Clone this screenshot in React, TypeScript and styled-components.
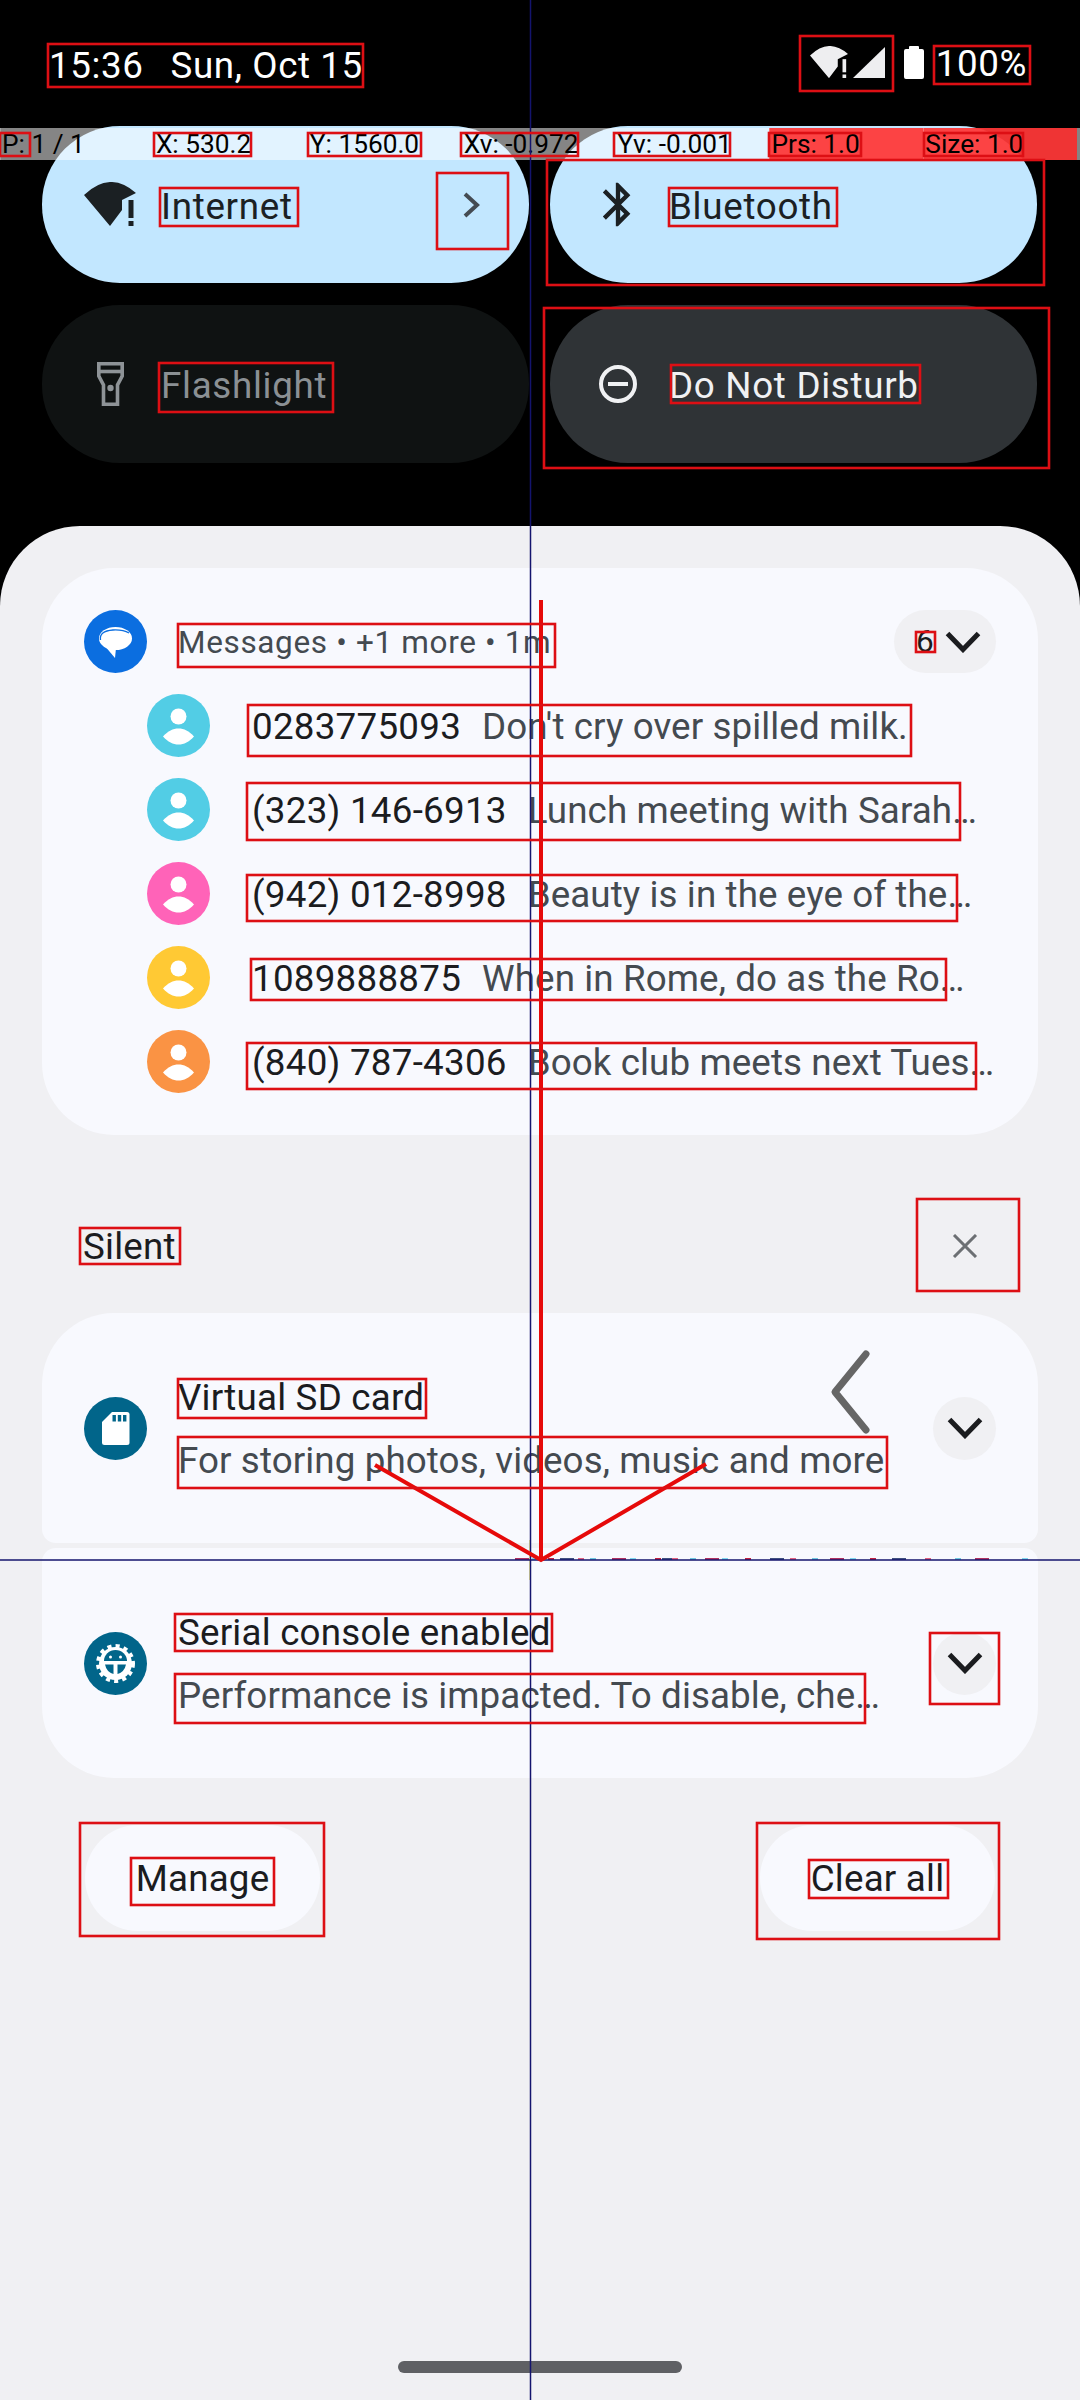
import React from "react";
import styled, { createGlobalStyle } from "styled-components";

const Global = createGlobalStyle`
  html, body { margin: 0; padding: 0; background: #000; }
  * { box-sizing: border-box; }
`;

const Page = styled.div`
  position: relative;
  width: 1080px;
  height: 2400px;
  overflow: hidden;
  display: flex;
  flex-direction: column;
  background: #000;
  font-family: Roboto, "Noto Sans", sans-serif;
  font-size: 36.75px;
`;

const StatusBar = styled.header`
  height: 126px;
  padding: 4px 53px 0 49px;
  display: flex;
  align-items: center;
  justify-content: space-between;
  color: #fff;
  letter-spacing: 0.6px;
`;
const Clock = styled.div`
  display: flex;
  gap: 27px;
`;
const StatusIcons = styled.div`
  display: flex;
  align-items: center;
  margin-top: -6px;
`;
const Percent = styled.span`
  margin-left: 12px;
  padding-top: 3px;
`;

const TileGrid = styled.section`
  display: grid;
  grid-template-columns: 487px 487px;
  grid-template-rows: 157px 158px;
  gap: 22px 21px;
  padding: 0 43px 0 42px;
`;
const Tile = styled.div<{ $bg: string; $fg: string }>`
  display: flex;
  align-items: center;
  gap: 25px;
  padding: 0 49px 0 42px;
  border-radius: 78px;
  background: ${(p) => p.$bg};
  color: ${(p) => p.$fg};
`;
const IconSlot = styled.span`
  width: 52px;
  height: 52px;
  display: flex;
  align-items: center;
  justify-content: center;
  flex: none;
`;
const TileLabel = styled.span`
  flex: 1;
  padding-top: 3px;
  letter-spacing: 0.7px;
`;

const Panel = styled.main`
  flex: 1;
  margin-top: 63px;
  padding: 42px 42px 27px;
  display: flex;
  flex-direction: column;
  background: #f0f0f3;
  border-radius: 80px 80px 0 0;
`;

const GroupCard = styled.article`
  height: 567px;
  padding: 42px 42px 0 42px;
  background: #f8f9fe;
  border-radius: 72px;
  display: flex;
  flex-direction: column;
  gap: 21px;
`;
const GroupHeader = styled.div`
  height: 63px;
  display: flex;
  align-items: center;
  gap: 31px;
`;
const HeaderText = styled.span`
  flex: 1;
  padding-top: 2px;
  font-size: 31.5px;
  letter-spacing: 0.65px;
  color: #444a50;
`;
const CountPill = styled.span`
  width: 102px;
  height: 63px;
  padding-left: 22px;
  display: flex;
  align-items: center;
  gap: 11px;
  border-radius: 32px;
  background: #f0f0f3;
  color: #1b1c1f;
  font-size: 31.5px;
`;
const MessageList = styled.ul`
  list-style: none;
  margin: 0;
  padding: 0 0 0 63px;
  display: flex;
  flex-direction: column;
  gap: 21px;
`;
const MessageRow = styled.li`
  height: 63px;
  display: flex;
  align-items: center;
  gap: 42px;
  white-space: nowrap;
`;
const MessageLine = styled.span`
  padding-top: 2px;
`;
const Sender = styled.span`
  color: #1b1c1f;
  letter-spacing: 0.25px;
`;
const Body = styled.span`
  margin-left: 21px;
  letter-spacing: 0.1px;
  color: #444a50;
`;

const SectionHeader = styled.div`
  height: 178px;
  padding: 44px 60px 0 41px;
  display: flex;
  align-items: center;
  justify-content: space-between;
  color: #1b1c1f;
  letter-spacing: 0.2px;
`;

const NotificationCard = styled.article<{ $position: "top" | "bottom" }>`
  height: 230px;
  padding: 0 42px 0 42px;
  display: flex;
  align-items: center;
  gap: 31px;
  background: #f8f9fe;
  border-radius: ${(p) => (p.$position === "top" ? "72px 72px 14px 14px" : "14px 14px 72px 72px")};
  margin-bottom: ${(p) => (p.$position === "top" ? "5px" : "0")};
`;
const NotificationText = styled.div`
  flex: 1;
  padding-top: 2px;
  line-height: 63px;
  white-space: nowrap;
`;
const Title = styled.div`
  color: #1b1c1f;
  letter-spacing: 0.2px;
`;
const Sub = styled.div`
  color: #444a50;
  letter-spacing: 0.1px;
`;
const ExpandButton = styled.span`
  width: 63px;
  height: 63px;
  flex: none;
  display: flex;
  align-items: center;
  justify-content: center;
  border-radius: 50%;
  background: #f0f0f3;
`;

const Footer = styled.div`
  margin-top: 47px;
  padding: 0 43px;
  display: flex;
  justify-content: space-between;
`;
const PillButton = styled.button`
  width: 235px;
  height: 106px;
  border: 0;
  padding: 0;
  border-radius: 53px;
  background: #f8f9fe;
  color: #1b1c1f;
  font: inherit;
  letter-spacing: 0.2px;
`;
const HomeBar = styled.div`
  margin-top: auto;
  align-self: center;
  width: 284px;
  height: 12px;
  border-radius: 6px;
  background: #5f6064;
`;

const PointerBar = styled.div`
  position: absolute;
  top: 128px;
  left: 0;
  width: 100%;
  height: 32px;
  display: grid;
  grid-template-columns: repeat(7, 153.9px);
  background: rgba(255, 255, 255, 0.52);
  font-size: 26.25px;
  line-height: 32px;
  color: #000;
`;
const PointerCell = styled.span<{ $alert?: boolean }>`
  padding-left: 1px;
  white-space: nowrap;
  border-left: 1px solid rgba(255, 255, 255, 0.25);
  background: ${(p) => (p.$alert ? "rgba(255, 40, 40, 0.87)" : "transparent")};
`;

const Overlay = styled.svg`
  position: absolute;
  inset: 0;
  pointer-events: none;
`;

const Chevron = () => (
  <svg width="36" height="22" viewBox="0 0 36 22">
    <path d="M2.5 2.5 L18 18.5 L33.5 2.5" fill="none" stroke="#1b1c1f" strokeWidth="5" />
  </svg>
);

const WifiAlert = ({ w, color }: { w: number; color: string }) => (
  <svg width={w} height={(w * 45) / 52} viewBox="0 0 52 45" style={{ flex: "none" }}>
    <path d="M0 13 Q26 -12 52 11 L38 18 V28 L26 44 Z" fill={color} />
    <rect x="44.5" y="18" width="5" height="18" fill={color} />
    <rect x="44.5" y="39" width="5" height="5" fill={color} />
  </svg>
);

const Bluetooth = () => (
  <svg width="53" height="53" viewBox="0 0 24 24" fill="#1b2023">
    <path d="M17.71 7.71L12 2h-1v7.59L6.41 5 5 6.41 10.59 12 5 17.59 6.41 19 11 14.41V22h1l5.71-5.71-4.3-4.29 4.3-4.29zM13 5.83l1.88 1.88L13 9.59V5.83zm1.88 10.46L13 18.17v-3.76l1.88 1.88z" />
  </svg>
);

const Flashlight = () => (
  <svg width="27" height="44" viewBox="0 0 27 44" fill="none" stroke="#8e9397" strokeWidth="3.6">
    <path d="M1.8 1.8 H25.2 V14 L20.5 23 V42.2 H6.5 V23 L1.8 14 Z" />
    <path d="M1.8 9.5 H25.2" />
    <circle cx="13.5" cy="26" r="3.2" fill="#8e9397" stroke="none" />
  </svg>
);

const MinusCircle = () => (
  <svg width="40" height="40" viewBox="0 0 40 40">
    <circle cx="20" cy="20" r="17" fill="none" stroke="#f0f1f3" strokeWidth="4" />
    <rect x="10" y="18" width="20" height="4" fill="#f0f1f3" />
  </svg>
);

const MessagesIcon = () => (
  <svg width="63" height="63" viewBox="0 0 63 63" style={{ flex: "none" }}>
    <circle cx="31.5" cy="31.5" r="31.5" fill="#0b6ee0" />
    <ellipse cx="31.5" cy="28.5" rx="16.5" ry="11.5" fill="#fff" />
    <path d="M20 35 L31 48 L32 38 Z" fill="#fff" />
    <path d="M16.5 30 Q15 21 29 20 Q39 19.5 45 23" fill="none" stroke="#0b6ee0" strokeWidth="1.3" />
  </svg>
);

const Avatar = ({ color }: { color: string }) => (
  <svg width="63" height="63" viewBox="0 0 63 63" style={{ flex: "none" }}>
    <circle cx="31.5" cy="31.5" r="31.5" fill={color} />
    <circle cx="31.5" cy="22.5" r="8" fill="#fff" />
    <path d="M16 42.5 C21 37 26 34.5 31.5 34.5 C37 34.5 42 37 47 42.5 C42 48 37 50.5 31.5 50.5 C26 50.5 21 48 16 42.5 Z" fill="#fff" />
  </svg>
);

const SdCardIcon = () => (
  <svg width="63" height="63" viewBox="0 0 63 63" style={{ flex: "none" }}>
    <circle cx="31.5" cy="31.5" r="31.5" fill="#01658a" />
    <path d="M28 15 H43 Q45.5 15 45.5 17.5 V45.5 Q45.5 48 43 48 H20.5 Q18 48 18 45.5 V25 Z" fill="#fff" />
    <rect x="28.5" y="18" width="3.4" height="6.5" fill="#01658a" />
    <rect x="33.8" y="18" width="3.4" height="6.5" fill="#01658a" />
    <rect x="39" y="18" width="3.4" height="6.5" fill="#01658a" />
  </svg>
);

const GearIcon = () => (
  <svg width="63" height="63" viewBox="0 0 63 63" style={{ flex: "none" }}>
    <circle cx="31.5" cy="31.5" r="31.5" fill="#01658a" />
    <circle cx="31.5" cy="31.5" r="16.5" fill="#fff" />
    <circle cx="31.5" cy="31.5" r="17.5" fill="none" stroke="#fff" strokeWidth="4" strokeDasharray="4.1 4.1" />
    <path d="M20 29 A11.5 11 0 0 1 43 29 Z" fill="#01658a" />
    <circle cx="26.5" cy="25" r="1.5" fill="#fff" />
    <circle cx="36.5" cy="25" r="1.5" fill="#fff" />
    <path d="M21 32.5 H29.5 V42 Q22.5 40 21 32.5 Z" fill="#01658a" />
    <path d="M42 32.5 H33.5 V42 Q40.5 40 42 32.5 Z" fill="#01658a" />
  </svg>
);

type Box = [number, number, number, number];
const boxes: Box[] = [
  [48, 44, 363, 87], [800, 36, 893, 91], [934, 46, 1030, 84],
  [0, 133, 30, 156], [154, 133, 251, 156], [308, 133, 421, 156], [461, 133, 578, 156],
  [614, 133, 730, 156], [769, 133, 861, 156], [924, 133, 1023, 156],
  [160, 188, 298, 226], [437, 173, 508, 249], [547, 160, 1044, 285], [669, 188, 837, 226],
  [159, 363, 333, 412], [544, 308, 1049, 468], [671, 365, 920, 403],
  [178, 624, 555, 667], [916, 632, 935, 652],
  [248, 705, 911, 756], [247, 783, 960, 840], [247, 875, 957, 921], [251, 959, 946, 1000], [247, 1043, 976, 1089],
  [80, 1228, 180, 1264], [917, 1199, 1019, 1291],
  [178, 1379, 426, 1418], [178, 1437, 887, 1488],
  [175, 1614, 552, 1651], [175, 1674, 865, 1723], [930, 1633, 999, 1704],
  [80, 1823, 324, 1936], [131, 1858, 274, 1905], [757, 1823, 999, 1939], [809, 1860, 948, 1898],
];

const traceColors = ["#b03060", "#80d8f0", "#c02040", "#405080", "#e06080", "#70c8e0"];
const traceMarks = [515, 532, 548, 560, 578, 590, 612, 630, 655, 662, 672, 690, 705, 722, 745, 770, 790, 812, 830, 850, 870, 892, 925, 955, 975, 1022];

const messages = [
  { color: "#52cde5", from: "0283775093", text: "Don't cry over spilled milk." },
  { color: "#52cde5", from: "(323) 146-6913", text: "Lunch meeting with Sarah…" },
  { color: "#ff63b8", from: "(942) 012-8998", text: "Beauty is in the eye of the…" },
  { color: "#ffc934", from: "1089888875", text: "When in Rome, do as the Ro…" },
  { color: "#fa9344", from: "(840) 787-4306", text: "Book club meets next Tues…" },
];

export default function App() {
  return (
    <Page>
      <Global />
      <StatusBar>
        <Clock>
          <span>15:36</span>
          <span>Sun, Oct 15</span>
        </Clock>
        <StatusIcons>
          <WifiAlert w={38} color="#eeeef0" />
          <svg width="32" height="31" viewBox="0 0 32 31" style={{ marginLeft: 5 }}>
            <path d="M0 31 L32 0 V31 Z" fill="#eeeef0" />
          </svg>
          <svg width="20" height="33" viewBox="0 0 20 33" style={{ marginLeft: 19 }}>
            <path d="M5 3 V1 Q5 0 6 0 H14 Q15 0 15 1 V3 H18 Q20 3 20 5 V31 Q20 33 18 33 H2 Q0 33 0 31 V5 Q0 3 2 3 Z" fill="#fff" />
          </svg>
          <Percent>100%</Percent>
        </StatusIcons>
      </StatusBar>

      <TileGrid>
        <Tile $bg="#c2e7ff" $fg="#1b2023">
          <IconSlot>
            <WifiAlert w={52} color="#1b2023" />
          </IconSlot>
          <TileLabel>Internet</TileLabel>
          <svg width="17" height="26" viewBox="0 0 17 26">
            <path d="M2 2 L14 13 L2 24" fill="none" stroke="#444b52" strokeWidth="4" />
          </svg>
        </Tile>
        <Tile $bg="#c2e7ff" $fg="#1b2023">
          <IconSlot>
            <Bluetooth />
          </IconSlot>
          <TileLabel>Bluetooth</TileLabel>
        </Tile>
        <Tile $bg="#0f1212" $fg="#8b9094">
          <IconSlot>
            <Flashlight />
          </IconSlot>
          <TileLabel>Flashlight</TileLabel>
        </Tile>
        <Tile $bg="#2f3336" $fg="#f0f1f3">
          <IconSlot>
            <MinusCircle />
          </IconSlot>
          <TileLabel>Do Not Disturb</TileLabel>
        </Tile>
      </TileGrid>

      <Panel>
        <GroupCard>
          <GroupHeader>
            <MessagesIcon />
            <HeaderText>Messages • +1 more • 1m</HeaderText>
            <CountPill>
              6
              <Chevron />
            </CountPill>
          </GroupHeader>
          <MessageList>
            {messages.map((m) => (
              <MessageRow key={m.from}>
                <Avatar color={m.color} />
                <MessageLine>
                  <Sender>{m.from}</Sender>
                  <Body>{m.text}</Body>
                </MessageLine>
              </MessageRow>
            ))}
          </MessageList>
        </GroupCard>

        <SectionHeader>
          <span>Silent</span>
          <svg width="26" height="24" viewBox="0 0 26 24">
            <path d="M2 1 L24 23 M24 1 L2 23" fill="none" stroke="#6c6f73" strokeWidth="3" />
          </svg>
        </SectionHeader>

        <NotificationCard $position="top">
          <SdCardIcon />
          <NotificationText>
            <Title>Virtual SD card</Title>
            <Sub>For storing photos, videos, music and more</Sub>
          </NotificationText>
          <ExpandButton>
            <Chevron />
          </ExpandButton>
        </NotificationCard>
        <NotificationCard $position="bottom">
          <GearIcon />
          <NotificationText>
            <Title>Serial console enabled</Title>
            <Sub>Performance is impacted. To disable, che…</Sub>
          </NotificationText>
          <ExpandButton>
            <Chevron />
          </ExpandButton>
        </NotificationCard>

        <Footer>
          <PillButton>Manage</PillButton>
          <PillButton>Clear all</PillButton>
        </Footer>
        <HomeBar />
      </Panel>

      <PointerBar>
        <PointerCell>P: 1 / 1</PointerCell>
        <PointerCell>X: 530.2</PointerCell>
        <PointerCell>Y: 1560.0</PointerCell>
        <PointerCell>Xv: -0.972</PointerCell>
        <PointerCell>Yv: -0.001</PointerCell>
        <PointerCell $alert>Prs: 1.0</PointerCell>
        <PointerCell $alert>Size: 1.0</PointerCell>
      </PointerBar>

      <Overlay width="1080" height="2400" viewBox="0 0 1080 2400">
        <path d="M866 1354 L835 1392 L866 1430" fill="none" stroke="#666" strokeWidth="7" strokeLinecap="round" strokeLinejoin="round" />
        <path d="M530 1540 V1580" stroke="#e8e27a" strokeWidth="1.5" />
        {traceMarks.map((x, i) => (
          <rect key={x} x={x} y={1558} width={i % 3 === 0 ? 14 : 6} height="2" fill={traceColors[i % traceColors.length]} />
        ))}
        <path d="M530.5 0 V2400 M0 1560 H1080" stroke="#14146e" strokeWidth="1.5" />
        <path d="M541 600 V1560 M375 1465 L541 1560 L706 1464" fill="none" stroke="#e60a0a" strokeWidth="4" />
        {boxes.map(([x1, y1, x2, y2]) => (
          <rect key={`${x1}-${y1}`} x={x1} y={y1} width={x2 - x1} height={y2 - y1} fill="none" stroke="#dd0f14" strokeWidth="2.6" />
        ))}
      </Overlay>
    </Page>
  );
}
